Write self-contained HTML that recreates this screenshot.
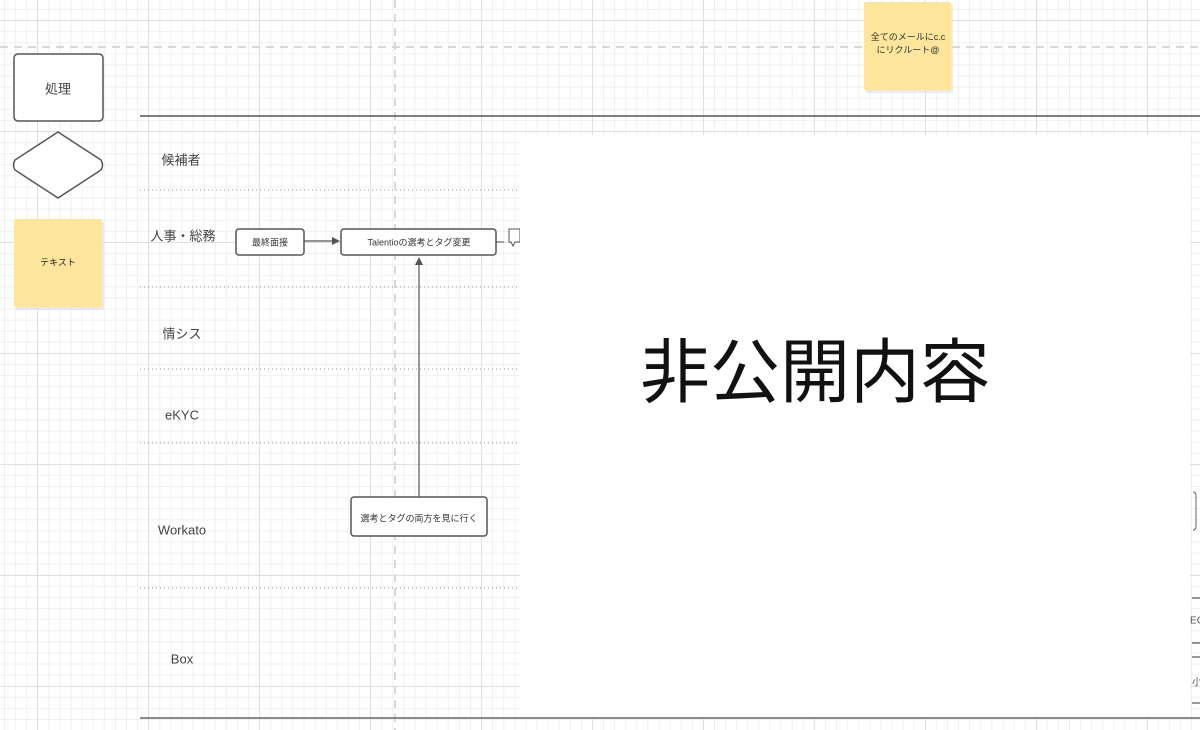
<!DOCTYPE html>
<html><head><meta charset="utf-8"><style>
html,body{margin:0;padding:0;width:1200px;height:730px;overflow:hidden;background:#fff;font-family:"Liberation Sans","Noto Sans CJK JP",sans-serif}
.grid{position:absolute;left:0;top:0;width:1200px;height:730px;
background-image:
linear-gradient(to right,#e0e0e0 1px,transparent 1px),
linear-gradient(to bottom,#e0e0e0 1px,transparent 1px),
linear-gradient(to right,#f0f0f0 1px,transparent 1px),
linear-gradient(to bottom,#f0f0f0 1px,transparent 1px);
background-size:111px 111px,111px 111px,11.1px 11.1px,11.1px 11.1px;
background-position:37px 0,0 20px,4px 0,0 9px}
.t{position:absolute;color:#444;white-space:nowrap;transform:translate(-50%,-50%)}
</style></head><body>
<div class="grid"></div>
<svg width="1200" height="730" style="position:absolute;left:0;top:0">
<line x1="0" y1="47" x2="1200" y2="47" stroke="#d8d8d8" stroke-width="2" stroke-dasharray="8,6"/>
<line x1="395" y1="0" x2="395" y2="730" stroke="#d8d8d8" stroke-width="2" stroke-dasharray="8,6"/>
<line x1="140" y1="116" x2="1200" y2="116" stroke="#555" stroke-width="1.5"/>
<g stroke="#999" stroke-width="1" stroke-dasharray="1,3">
<line x1="140" y1="190" x2="520" y2="190"/><line x1="140" y1="287" x2="520" y2="287"/>
<line x1="140" y1="369" x2="520" y2="369"/><line x1="140" y1="443" x2="520" y2="443"/>
<line x1="140" y1="588" x2="520" y2="588"/></g>
<rect x="14" y="54" width="89" height="67" rx="4" fill="#fff" stroke="#555" stroke-width="1.5"/>
<path d="M58 132 L101 160 Q104 165 101 170 L58 198 L15 170 Q12 165 15 160 Z" fill="#fff" stroke="#555" stroke-width="1.5"/>
<rect x="16" y="222" width="88" height="88" fill="#ddd" opacity=".6"/>
<rect x="14" y="219" width="88" height="88" rx="2" fill="#fde59b"/>
<rect x="866" y="5" width="87" height="88" fill="#ddd" opacity=".6"/>
<rect x="864" y="2" width="87" height="88" rx="2" fill="#fde59b"/>
<rect x="236" y="229" width="68" height="26" rx="3" fill="#fff" stroke="#555" stroke-width="1.5"/>
<rect x="341" y="229" width="155" height="26" rx="3" fill="#fff" stroke="#555" stroke-width="1.5"/>
<line x1="304" y1="241" x2="332" y2="241" stroke="#555" stroke-width="1.2"/>
<path d="M332 237 L340 241 L332 245 Z" fill="#555"/>
<line x1="496" y1="242" x2="504" y2="242" stroke="#555"/>
<path d="M509 229 h11 v13 h-5 l-2 4 l-2 -4 h-2 z" fill="#fff" stroke="#555"/>
<line x1="419" y1="497" x2="419" y2="265" stroke="#555" stroke-width="1.2"/>
<path d="M415 265 L419 257 L423 265 Z" fill="#555"/>
<rect x="351" y="497" width="136" height="39" rx="3" fill="#fff" stroke="#555" stroke-width="1.5"/>
<rect x="520" y="135" width="670" height="583" fill="#fff"/>
<line x1="140" y1="718" x2="1200" y2="718" stroke="#666" stroke-width="1.5"/>
<path d="M1193 492 q3 0 3 4 v30 q0 4 -3 4" fill="none" stroke="#666"/>
<g stroke="#555" stroke-width="1.2"><line x1="1192" y1="598" x2="1200" y2="598"/><line x1="1192" y1="643" x2="1200" y2="643"/><line x1="1192" y1="657" x2="1200" y2="657"/><line x1="1192" y1="703" x2="1200" y2="703"/></g>
</svg>
<div class="t" style="left:58px;top:88px;font-size:13px">処理</div>
<div class="t" style="left:58px;top:262px;font-size:9px;color:#222">テキスト</div>
<div class="t" style="left:908px;top:44px;font-size:9px;color:#333;line-height:13px;text-align:center">全てのメールにc.c<br>にリクルート@</div>
<div class="t" style="left:181px;top:159px;font-size:13px">候補者</div>
<div class="t" style="left:183px;top:235px;font-size:13px">人事・総務</div>
<div class="t" style="left:182px;top:333px;font-size:13px">情シス</div>
<div class="t" style="left:182px;top:415px;font-size:13px">eKYC</div>
<div class="t" style="left:182px;top:530px;font-size:13px">Workato</div>
<div class="t" style="left:182px;top:659px;font-size:13px">Box</div>
<div class="t" style="left:270px;top:242px;font-size:9px;color:#333">最終面接</div>
<div class="t" style="left:419px;top:242px;font-size:9px;color:#333">Talentioの選考とタグ変更</div>
<div class="t" style="left:419px;top:518px;font-size:9px;color:#333">選考とタグの両方を見に行く</div>
<div class="t" style="left:815px;top:367px;font-size:70px;color:#111">非公開内容</div>
<div class="t" style="left:1197px;top:621px;font-size:10px;color:#555">EC</div>
<div class="t" style="left:1197px;top:681px;font-size:10px;color:#555">小</div>
</body></html>
